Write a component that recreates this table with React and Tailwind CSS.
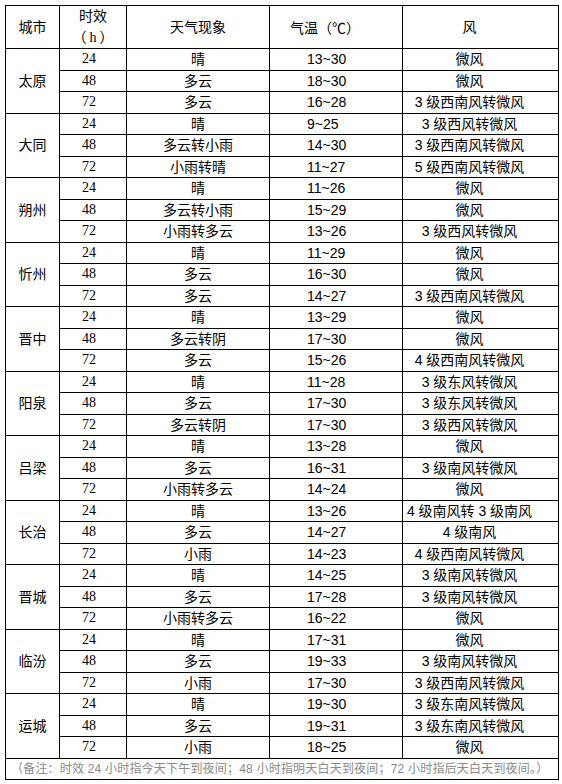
import React from 'react';

const rows = [
  ['太原', [['24', '晴', '13~30', '微风'], ['48', '多云', '18~30', '微风'], ['72', '多云', '16~28', '3 级西南风转微风']]],
  ['大同', [['24', '晴', '9~25', '3 级西风转微风'], ['48', '多云转小雨', '14~30', '3 级西南风转微风'], ['72', '小雨转晴', '11~27', '5 级西南风转微风']]],
  ['朔州', [['24', '晴', '11~26', '微风'], ['48', '多云转小雨', '15~29', '微风'], ['72', '小雨转多云', '13~26', '3 级西风转微风']]],
  ['忻州', [['24', '晴', '11~29', '微风'], ['48', '多云', '16~30', '微风'], ['72', '多云', '14~27', '3 级西南风转微风']]],
  ['晋中', [['24', '晴', '13~29', '微风'], ['48', '多云转阴', '17~30', '微风'], ['72', '多云', '15~26', '4 级西南风转微风']]],
  ['阳泉', [['24', '晴', '11~28', '3 级东风转微风'], ['48', '多云', '17~30', '3 级东风转微风'], ['72', '多云转阴', '17~30', '3 级西风转微风']]],
  ['吕梁', [['24', '晴', '13~28', '微风'], ['48', '多云', '16~31', '3 级南风转微风'], ['72', '小雨转多云', '14~24', '微风']]],
  ['长治', [['24', '晴', '13~26', '4 级南风转 3 级南风'], ['48', '多云', '14~27', '4 级南风'], ['72', '小雨', '14~23', '4 级西南风转微风']]],
  ['晋城', [['24', '晴', '14~25', '3 级南风转微风'], ['48', '多云', '17~28', '3 级南风转微风'], ['72', '小雨转多云', '16~22', '微风']]],
  ['临汾', [['24', '晴', '17~31', '微风'], ['48', '多云', '19~33', '3 级南风转微风'], ['72', '小雨', '17~30', '3 级西南风转微风']]],
  ['运城', [['24', '晴', '19~30', '3 级东南风转微风'], ['48', '多云', '19~31', '3 级东南风转微风'], ['72', '小雨', '18~25', '微风']]],
];

const cjk = "font-['Liberation_Sans','Noto_Sans_CJK_SC',sans-serif]";

export default function App() {
  return (
    <div className="bg-white w-[562px] h-[784px] pt-[5px] pl-[5px] text-black">
      <table className={`border-collapse table-fixed w-[553px] text-[14px] leading-[20px] ${cjk}`}>
        <colgroup>
          <col className="w-[54px]" />
          <col className="w-[67px]" />
          <col className="w-[143px]" />
          <col className="w-[133px]" />
          <col className="w-[156px]" />
        </colgroup>
        <thead>
          <tr className="h-[42px]">
            <th className="border border-black font-normal text-center p-0">城市</th>
            <th className="border border-black font-normal text-center p-0">
              <div>时效</div>
              <div>
                <span className="font-['Noto_Sans_CJK_SC',sans-serif]">（</span>
                <span className="font-['Liberation_Serif',serif] px-[3px]">h</span>
                <span className="font-['Noto_Sans_CJK_SC',sans-serif]">）</span>
              </div>
            </th>
            <th className="border border-black font-normal text-center p-0">天气现象</th>
            <th className="border border-black font-normal text-left p-0 pl-[20px] font-['Noto_Sans_CJK_SC',sans-serif]">气温（℃）</th>
            <th className="border border-black font-normal text-center p-0 pr-[22px]">风</th>
          </tr>
        </thead>
        <tbody>
          {rows.map(([city, items]) =>
            items.map((r, i) => (
              <tr key={city + i} className="h-[21.5px]">
                {i === 0 && (
                  <td rowSpan={3} className="border border-black text-center p-0">
                    {city}
                  </td>
                )}
                <td className="border border-black text-center p-0 pr-2 font-['Liberation_Serif',serif]">{r[0]}</td>
                <td className="border border-black text-center p-0">{r[1]}</td>
                <td className="border border-black text-left p-0 pl-[37px]">{r[2]}</td>
                <td className="border border-black text-center p-0 pr-[22px]">{r[3]}</td>
              </tr>
            ))
          )}
          <tr className="h-[21px]">
            <td colSpan={5} className="border border-black p-0 pl-[5px] text-[12px] tracking-[0.2px] text-[#8a8a8a] whitespace-nowrap overflow-hidden">
              （备注：时效 24 小时指今天下午到夜间；48 小时指明天白天到夜间；72 小时指后天白天到夜间。）
            </td>
          </tr>
        </tbody>
      </table>
    </div>
  );
}
